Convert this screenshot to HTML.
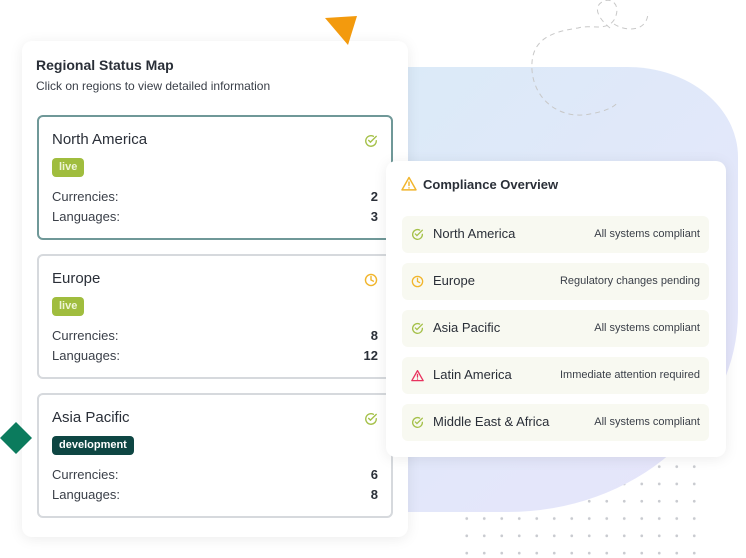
<!DOCTYPE html>
<html><head><meta charset="utf-8"><style>
*{box-sizing:border-box;margin:0;padding:0}
body{width:746px;height:557px;overflow:hidden;background:#fff;font-family:"Liberation Sans",sans-serif;color:#2a2f38;position:relative}
.abs{position:absolute}
.dots{left:458px;top:458px;width:250px;height:100px;background-image:radial-gradient(circle,#c9cbd0 1.2px,transparent 1.6px);background-size:17.5px 17.3px;}
.blob{left:408px;top:67px;width:330px;height:445px;background:linear-gradient(135deg,#dbeaf8 0%,#e3e7fa 60%,#e6e4fb 100%);border-radius:0 110px 230px 0/0 90px 200px 0}
.card{left:22px;top:41px;width:386px;height:496px;background:#fff;border-radius:10px;box-shadow:0 2px 14px rgba(0,0,0,.08)}
.rc{position:absolute;left:37px;width:356px;height:125px;border:2px solid #d6d9dd;border-radius:6px;background:#fff}
.rc.sel{border-color:#6f9898}
.rc h3{position:absolute;left:13px;top:14px;font-size:15px;font-weight:normal;color:#2a2f38}
.rc .ic{position:absolute;right:13px;top:17px}
.tag{position:absolute;left:13px;top:41px;height:19px;padding:0 7px;border-radius:4px;font-size:11px;font-weight:bold;color:#fff;line-height:19px}
.live{background:#a0bd3e;color:#eef5d6}
.dev{background:#0e4643}
.kv{position:absolute;left:13px;right:13px;font-size:13px;color:#3a3f48}
.kv b{float:right;font-weight:bold;color:#2a2f38}
.comp{left:386px;top:161px;width:340px;height:296px;background:#fff;border-radius:10px;box-shadow:0 2px 14px rgba(0,0,0,.08)}
.row{position:absolute;left:16px;width:307px;height:37px;background:#f8f9f1;border-radius:6px}
.row svg{position:absolute;left:9px;top:12px}
.row .n{position:absolute;left:31px;top:10px;font-size:13px;color:#2a2f38}
.row .s{position:absolute;right:9px;top:12px;font-size:11px;color:#3a3f48}
</style></head><body>
<div class="abs dots"></div>
<div class="abs blob"></div>
<svg class="abs" style="left:530px;top:0" width="130" height="120"><path d="M80 28 C70 20 62 8 72 2 C82 -4 92 6 84 20 C76 32 60 24 48 28 C20 32 0 40 2 70 C4 100 30 120 60 114 C72 112 84 108 88 102" fill="none" stroke="#c8c8c8" stroke-width="1" stroke-dasharray="5 4"/><path d="M84 24 C96 32 118 32 118 12" fill="none" stroke="#c8c8c8" stroke-dasharray="5 4"/></svg>
<div class="abs card">
<div class="abs" style="left:14px;top:16px;font-size:14px;font-weight:bold;color:#2a2f38">Regional Status Map</div>
<div class="abs" style="left:14px;top:38px;font-size:12px;color:#3a3f48">Click on regions to view detailed information</div>
</div>
<svg class="abs" style="left:324px;top:16px" width="34" height="30"><polygon points="1,2 33,0 24,29" fill="#f39a0d"/></svg>
<svg class="abs" style="left:0;top:422px" width="33" height="32"><polygon points="16,0 32,16 16,32 0,16" fill="#0b7b5d"/></svg>

<div class="rc sel" style="top:115px"><h3>North America</h3>
<svg class="ic" width="14" height="14" viewBox="0 0 24 24" fill="none" stroke="#a5c14a" stroke-width="2.4" stroke-linecap="round"><path d="M21 11.5A9 9 0 1 1 16 3.9"/><path d="M8 11l3 3 10-10"/></svg>
<span class="tag live">live</span><div class="kv" style="top:72px">Currencies:<b>2</b></div><div class="kv" style="top:92px">Languages:<b>3</b></div></div>
<div class="rc" style="top:254px"><h3>Europe</h3>
<svg class="ic" width="14" height="14" viewBox="0 0 24 24" fill="none" stroke="#f1b52c" stroke-width="2.4" stroke-linecap="round"><circle cx="12" cy="12" r="9.5"/><path d="M12 6v6l4 2"/></svg>
<span class="tag live">live</span><div class="kv" style="top:72px">Currencies:<b>8</b></div><div class="kv" style="top:92px">Languages:<b>12</b></div></div>
<div class="rc" style="top:393px"><h3>Asia Pacific</h3>
<svg class="ic" width="14" height="14" viewBox="0 0 24 24" fill="none" stroke="#a5c14a" stroke-width="2.4" stroke-linecap="round"><path d="M21 11.5A9 9 0 1 1 16 3.9"/><path d="M8 11l3 3 10-10"/></svg>
<span class="tag dev">development</span><div class="kv" style="top:72px">Currencies:<b>6</b></div><div class="kv" style="top:92px">Languages:<b>8</b></div></div>

<div class="abs comp">
<svg class="abs" style="left:15px;top:15px" width="16" height="15" viewBox="0 0 24 22" fill="none" stroke="#f1b52c" stroke-width="2.2" stroke-linejoin="round" stroke-linecap="round"><path d="M12 2L1.5 20.5h21z"/><path d="M12 9v5M12 17.5v.2"/></svg>
<div class="abs" style="left:37px;top:16px;font-size:13px;font-weight:bold;color:#2a2f38">Compliance Overview</div>
<div class="row" style="top:55px"><svg width="13" height="13" viewBox="0 0 24 24" fill="none" stroke="#a5c14a" stroke-width="2.4" stroke-linecap="round"><path d="M21 11.5A9 9 0 1 1 16 3.9"/><path d="M8 11l3 3 10-10"/></svg><span class="n">North America</span><span class="s">All systems compliant</span></div>
<div class="row" style="top:102px"><svg width="13" height="13" viewBox="0 0 24 24" fill="none" stroke="#f1b52c" stroke-width="2.4" stroke-linecap="round"><circle cx="12" cy="12" r="9.5"/><path d="M12 6v6l4 2"/></svg><span class="n">Europe</span><span class="s">Regulatory changes pending</span></div>
<div class="row" style="top:149px"><svg width="13" height="13" viewBox="0 0 24 24" fill="none" stroke="#a5c14a" stroke-width="2.4" stroke-linecap="round"><path d="M21 11.5A9 9 0 1 1 16 3.9"/><path d="M8 11l3 3 10-10"/></svg><span class="n">Asia Pacific</span><span class="s">All systems compliant</span></div>
<div class="row" style="top:196px"><svg width="13" height="13" viewBox="0 0 24 22" fill="none" stroke="#e8335f" stroke-width="2.4" stroke-linejoin="round" stroke-linecap="round"><path d="M12 2L1.5 20.5h21z"/><path d="M12 9v5M12 17.5v.2"/></svg><span class="n">Latin America</span><span class="s">Immediate attention required</span></div>
<div class="row" style="top:243px"><svg width="13" height="13" viewBox="0 0 24 24" fill="none" stroke="#a5c14a" stroke-width="2.4" stroke-linecap="round"><path d="M21 11.5A9 9 0 1 1 16 3.9"/><path d="M8 11l3 3 10-10"/></svg><span class="n">Middle East &amp; Africa</span><span class="s">All systems compliant</span></div>
</div>
</body></html>
